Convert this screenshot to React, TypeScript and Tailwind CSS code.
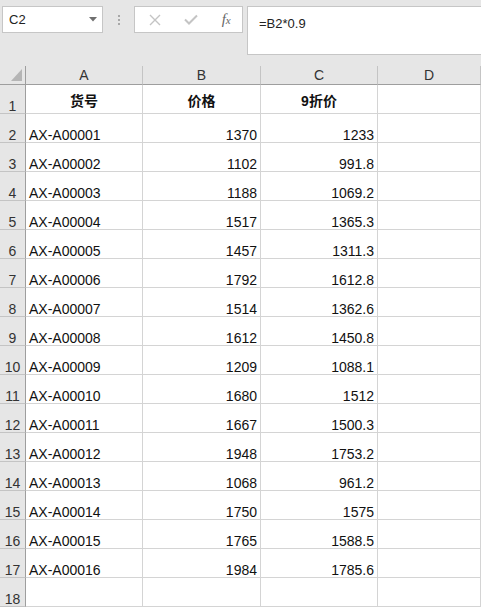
import React from "react";

const data: [string, string, string][] = [
  ["AX-A00001", "1370", "1233"],
  ["AX-A00002", "1102", "991.8"],
  ["AX-A00003", "1188", "1069.2"],
  ["AX-A00004", "1517", "1365.3"],
  ["AX-A00005", "1457", "1311.3"],
  ["AX-A00006", "1792", "1612.8"],
  ["AX-A00007", "1514", "1362.6"],
  ["AX-A00008", "1612", "1450.8"],
  ["AX-A00009", "1209", "1088.1"],
  ["AX-A00010", "1680", "1512"],
  ["AX-A00011", "1667", "1500.3"],
  ["AX-A00012", "1948", "1753.2"],
  ["AX-A00013", "1068", "961.2"],
  ["AX-A00014", "1750", "1575"],
  ["AX-A00015", "1765", "1588.5"],
  ["AX-A00016", "1984", "1785.6"],
];

const cell = "h-[29px] border-r border-b border-[#d4d4d4] bg-white flex items-end pb-0 text-[14px] leading-[14px] text-[#111] overflow-hidden whitespace-nowrap";
const rowHead = "h-[29px] border-r border-b border-r-[#9e9e9e] border-b-[#c4c4c4] bg-[#e6e6e6] flex items-end justify-center pb-0 text-[14px] leading-[14px] text-[#333]";
const colHead = "h-[19px] border-r border-b border-r-[#c4c4c4] border-b-[#9e9e9e] bg-[#e6e6e6] flex items-center justify-center text-[14px] text-[#333] pt-[1px]";

export default function App() {
  const rows: React.ReactNode[] = [];
  rows.push(
    <React.Fragment key="r1">
      <div className={rowHead}>1</div>
      <div className={cell + " justify-center font-bold pb-[5px]"}>货号</div>
      <div className={cell + " justify-center font-bold pb-[5px]"}>价格</div>
      <div className={cell + " justify-center font-bold pb-[5px]"}>9折价</div>
      <div className={cell}></div>
    </React.Fragment>
  );
  data.forEach((d, i) => {
    rows.push(
      <React.Fragment key={"r" + (i + 2)}>
        <div className={rowHead}>{i + 2}</div>
        <div className={cell + " pl-[3px]"}>{d[0]}</div>
        <div className={cell + " justify-end pr-[3px]"}>{d[1]}</div>
        <div className={cell + " justify-end pr-[3px]"}>{d[2]}</div>
        <div className={cell}></div>
      </React.Fragment>
    );
  });
  rows.push(
    <React.Fragment key="r18">
      <div className={rowHead}>18</div>
      <div className={cell}></div>
      <div className={cell}></div>
      <div className={cell}></div>
      <div className={cell}></div>
    </React.Fragment>
  );

  return (
    <div className="w-[481px] h-[607px] overflow-hidden bg-[#e6e6e6] font-['Liberation_Sans','Noto_Sans_CJK_SC',sans-serif]">
      {/* formula bar */}
      <div className="h-[66px] flex items-start pt-[6px] pl-[2px]">
        <div className="w-[101px] h-[27px] bg-white border border-[#c6c6c6] flex items-center justify-between pl-[6px] pr-[5px]">
          <span className="text-[13px] text-[#222]">C2</span>
          <svg width="8" height="5" viewBox="0 0 8 5"><path d="M0 0H8L4 4.5Z" fill="#6f6f6f" /></svg>
        </div>
        <div className="w-[31px] h-[27px] flex flex-col items-center justify-center gap-[2px]">
          <div className="w-[2px] h-[2px] bg-[#a8a8a8]" />
          <div className="w-[2px] h-[2px] bg-[#a8a8a8]" />
          <div className="w-[2px] h-[2px] bg-[#a8a8a8]" />
        </div>
        <div className="w-[109px] h-[27px] bg-white border border-[#c6c6c6] flex items-center">
          <div className="w-[36px] flex justify-center pl-[4px]">
            <svg width="12" height="12" viewBox="0 0 12 12"><path d="M1 1L11 11M11 1L1 11" stroke="#c4c4c4" strokeWidth="1.4" /></svg>
          </div>
          <div className="w-[36px] flex justify-center pl-[4px]">
            <svg width="14" height="11" viewBox="0 0 14 11"><path d="M1 5.5L5 9.5L13 1.5" stroke="#c4c4c4" strokeWidth="2" fill="none" /></svg>
          </div>
          <div className="w-[36px] flex justify-center pl-[4px]">
            <span className="font-['Liberation_Serif'] italic text-[15px] text-[#666] leading-none">f<span className="text-[11px]">x</span></span>
          </div>
        </div>
        <div className="ml-[4px] flex-1 h-[49px] bg-white border border-r-0 border-[#c6c6c6] pl-[11px] pt-[4px]">
          <span className="text-[13px] text-[#222]">=B2*0.9</span>
        </div>
      </div>
      {/* grid */}
      <div className="grid grid-cols-[26px_117px_118px_117px_1fr]">
        <div className="h-[19px] border-r border-b border-r-[#9e9e9e] border-b-[#9e9e9e] bg-[#e6e6e6] relative">
          <svg className="absolute left-[11px] top-[3px]" width="11" height="12" viewBox="0 0 11 12"><path d="M11 0V12H0Z" fill="#b5b5b5" /></svg>
        </div>
        <div className={colHead}>A</div>
        <div className={colHead}>B</div>
        <div className={colHead}>C</div>
        <div className={colHead}>D</div>
        {rows}
      </div>
    </div>
  );
}
